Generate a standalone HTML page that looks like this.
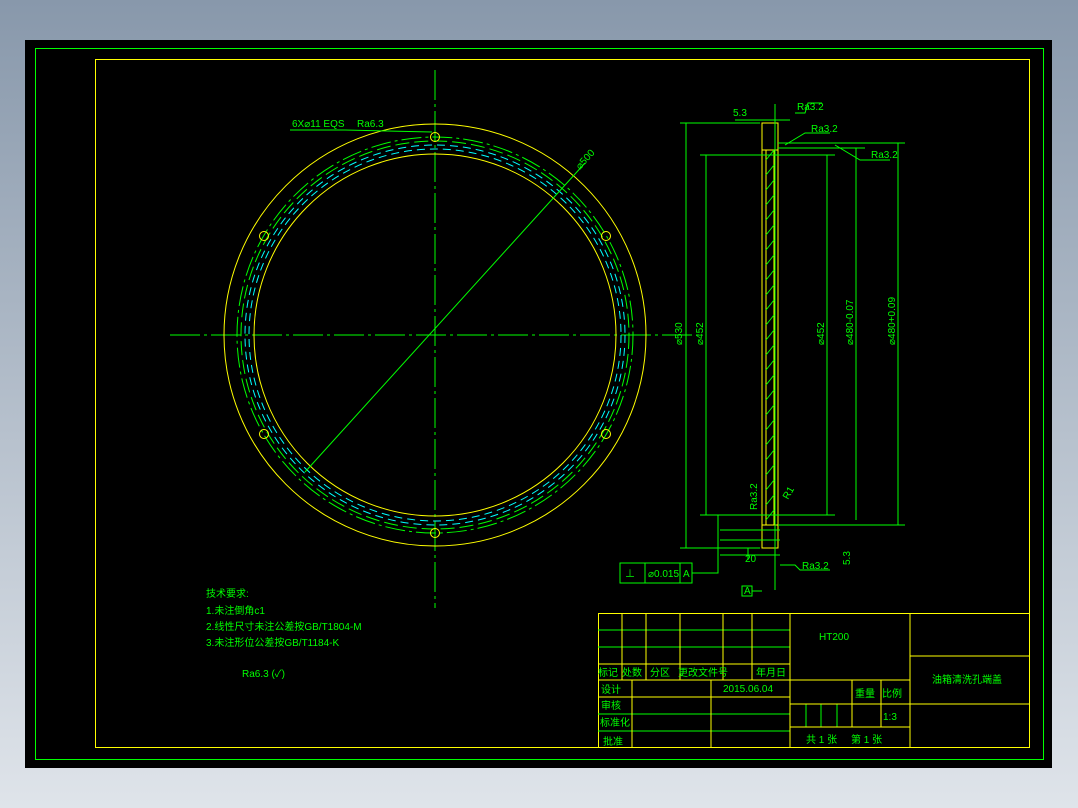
<!DOCTYPE html>
<html><head><meta charset="utf-8"><style>
body{margin:0;width:1078px;height:808px;overflow:hidden;background:linear-gradient(#8898ab,#dfe4ea);}
svg{position:absolute;left:0;top:0}
text{font-family:"Liberation Sans","Noto Sans CJK SC",sans-serif;fill:#00ff00;font-size:10px}
</style></head><body>
<svg width="1078" height="808" viewBox="0 0 1078 808">
<rect x="25" y="40" width="1027" height="728" fill="#000"/>
<rect x="35.5" y="48.5" width="1008" height="711" fill="none" stroke="#00ff00" stroke-width="1"/>
<rect x="95.5" y="59.5" width="934" height="688" fill="none" stroke="#ffff00" stroke-width="1"/>
<g fill="none" stroke-width="1">
<line x1="435" y1="70" x2="435" y2="608" stroke="#00ff00" stroke-dasharray="30,4,3,4"/>
<line x1="170" y1="335" x2="700" y2="335" stroke="#00ff00" stroke-dasharray="30,4,3,4"/>
<circle cx="435" cy="335" r="211" stroke="#ffff00"/>
<circle cx="435" cy="335" r="181" stroke="#ffff00"/>
<circle cx="435" cy="335" r="198" stroke="#00ff00" stroke-dasharray="20,4,3,4"/>
<circle cx="435" cy="335" r="194" stroke="#00ff00" stroke-dasharray="14,5"/>
<circle cx="435" cy="335" r="190" stroke="#00ffff" stroke-dasharray="8,5"/>
<circle cx="435" cy="335" r="186" stroke="#00ffff" stroke-dasharray="8,5"/>
<g stroke="#ffff00"><circle cx="435" cy="137" r="4.5"/><circle cx="435" cy="533" r="4.5"/><circle cx="606" cy="236" r="4.5"/><circle cx="606" cy="434" r="4.5"/><circle cx="264" cy="236" r="4.5"/><circle cx="264" cy="434" r="4.5"/></g>
<line x1="305" y1="472" x2="585" y2="163" stroke="#00ff00"/>
<polyline points="290,130 345,130 432,132" stroke="#00ff00"/>
<g stroke="#ffff00"><rect x="762" y="123" width="16" height="425"/><line x1="766" y1="150" x2="766" y2="525"/><line x1="774" y1="150" x2="774" y2="525"/><line x1="762" y1="150" x2="778" y2="150"/><line x1="762" y1="525" x2="778" y2="525"/></g>
<path d="M766,160 L774,150 M766,175 L774,165 M766,190 L774,180 M766,205 L774,195 M766,220 L774,210 M766,235 L774,225 M766,250 L774,240 M766,265 L774,255 M766,280 L774,270 M766,295 L774,285 M766,310 L774,300 M766,325 L774,315 M766,340 L774,330 M766,355 L774,345 M766,370 L774,360 M766,385 L774,375 M766,400 L774,390 M766,415 L774,405 M766,430 L774,420 M766,445 L774,435 M766,460 L774,450 M766,475 L774,465 M766,490 L774,480 M766,505 L774,495 M766,520 L774,510" stroke="#00ff00"/>
<g stroke="#00ff00">
<line x1="680" y1="123" x2="760" y2="123"/><line x1="686" y1="123" x2="686" y2="548"/><line x1="680" y1="548" x2="760" y2="548"/>
<line x1="700" y1="155" x2="835" y2="155"/><line x1="706" y1="155" x2="706" y2="515"/><line x1="700" y1="515" x2="835" y2="515"/><line x1="827" y1="155" x2="827" y2="515"/>
<line x1="778" y1="143" x2="905" y2="143"/><line x1="898" y1="143" x2="898" y2="525"/><line x1="778" y1="525" x2="905" y2="525"/>
<line x1="778" y1="148" x2="865" y2="148"/><line x1="856" y1="148" x2="856" y2="520"/>
<line x1="775" y1="104" x2="775" y2="590"/><line x1="735" y1="120" x2="790" y2="120"/>
<line x1="720" y1="530" x2="780" y2="530"/><line x1="720" y1="540" x2="780" y2="540"/><line x1="720" y1="555" x2="780" y2="555"/>
<line x1="748" y1="548" x2="748" y2="560"/>
<polyline points="795,113 805,113 808,103 822,103"/><polyline points="785,145 805,133 830,133"/><polyline points="835,145 860,160 890,160"/><polyline points="780,565 795,565 800,570 830,570"/>
<rect x="620" y="563" width="72" height="20"/><line x1="645" y1="563" x2="645" y2="583"/><line x1="680" y1="563" x2="680" y2="583"/>
<polyline points="692,573 718,573 718,515"/>
<rect x="742" y="586" width="10" height="10"/><polyline points="752,591 762,591"/>
</g>
</g>
<g font-size="9">
<text x="292" y="127">6X⌀11 EQS</text><text x="357" y="127">Ra6.3</text>
<text x="580" y="170" transform="rotate(-48 580 170)">⌀500</text>
<text x="733" y="116">5.3</text><text x="797" y="110">Ra3.2</text><text x="811" y="132">Ra3.2</text><text x="871" y="158">Ra3.2</text>
<text x="682" y="345" transform="rotate(-90 682 345)">⌀530</text><text x="703" y="345" transform="rotate(-90 703 345)">⌀452</text><text x="824" y="345" transform="rotate(-90 824 345)">⌀452</text><text x="853" y="345" transform="rotate(-90 853 345)">⌀480-0.07</text><text x="895" y="345" transform="rotate(-90 895 345)">⌀480+0.09</text>
<text x="757" y="510" transform="rotate(-90 757 510)">Ra3.2</text><text x="788" y="500" transform="rotate(-60 788 500)">R1</text>
<text x="745" y="562">20</text><text x="802" y="569">Ra3.2</text><text x="850" y="565" transform="rotate(-90 850 565)">5.3</text>
<text x="625" y="577">⊥</text><text x="648" y="577">⌀0.015</text><text x="683" y="577">A</text><text x="744" y="594" font-size="8">A</text>
</g>
<text x="206" y="597" font-size="12">技术要求:</text>
<text x="206" y="614" font-size="9">1.未注倒角c1</text>
<text x="206" y="630" font-size="9">2.线性尺寸未注公差按GB/T1804-M</text>
<text x="206" y="646" font-size="9">3.未注形位公差按GB/T1184-K</text>
<text x="242" y="677" font-size="9">Ra6.3  (✓)</text>
<g stroke-width="1" fill="none">
<rect x="598.5" y="613.5" width="431" height="134" stroke="#ffff00"/>
<g stroke="#00ff00"><line x1="598" y1="630" x2="790" y2="630"/><line x1="598" y1="647" x2="790" y2="647"/><line x1="598" y1="714" x2="790" y2="714"/><line x1="598" y1="731" x2="790" y2="731"/><line x1="806" y1="704" x2="806" y2="727"/><line x1="821" y1="704" x2="821" y2="727"/><line x1="837" y1="704" x2="837" y2="727"/></g>
<g stroke="#ffff00"><line x1="598" y1="664" x2="790" y2="664"/><line x1="598" y1="680" x2="910" y2="680"/><line x1="598" y1="697" x2="790" y2="697"/>
<line x1="622" y1="613" x2="622" y2="680"/><line x1="646" y1="613" x2="646" y2="680"/><line x1="680" y1="613" x2="680" y2="680"/><line x1="723" y1="613" x2="723" y2="680"/><line x1="752" y1="613" x2="752" y2="680"/>
<line x1="632" y1="680" x2="632" y2="748"/><line x1="711" y1="680" x2="711" y2="748"/><line x1="790" y1="613" x2="790" y2="748"/><line x1="910" y1="613" x2="910" y2="748"/>
<line x1="852" y1="680" x2="852" y2="727"/><line x1="881" y1="680" x2="881" y2="727"/><line x1="790" y1="704" x2="1030" y2="704"/><line x1="790" y1="727" x2="910" y2="727"/><line x1="910" y1="656" x2="1030" y2="656"/></g>
</g>
<g font-size="10">
<text x="819" y="640">HT200</text>
<text x="598" y="676">标记</text><text x="622" y="676">处数</text><text x="650" y="676">分区</text><text x="678" y="676">更改文件号</text><text x="756" y="676">年月日</text>
<text x="601" y="693">设计</text><text x="723" y="692">2015.06.04</text>
<text x="601" y="709">审核</text><text x="600" y="726">标准化</text><text x="603" y="745">批准</text>
<text x="855" y="697">重量</text><text x="882" y="697">比例</text><text x="883" y="720">1:3</text>
<text x="806" y="743">共 1 张</text><text x="851" y="743">第 1 张</text>
<text x="932" y="683">油箱清洗孔端盖</text>
</g>
</svg>
</body></html>
